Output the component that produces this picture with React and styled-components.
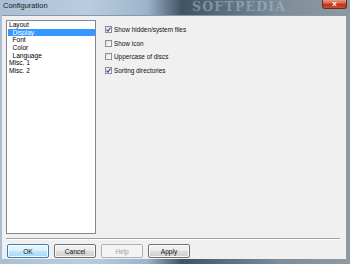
import React from "react";
import styled, { createGlobalStyle } from "styled-components";

const Global = createGlobalStyle`
  html, body { margin: 0; padding: 0; }
  body { width: 350px; height: 264px; overflow: hidden; font-family: "Liberation Sans", Arial, sans-serif; }
`;

const Frame = styled.div`
  width: 350px;
  height: 264px;
  display: flex;
  flex-direction: column;
  background: linear-gradient(90deg, #a9bfd3 0%, #b9cde0 25%, #9cb4ca 42%, #3f5362 52%, #55697a 62%, #7d8d99 80%, #8e9aa3 100%);
  box-sizing: border-box;
`;

const TitleBar = styled.div`
  position: relative;
  height: 15px;
  flex: none;
  display: flex;
  align-items: flex-start;
  justify-content: space-between;
  overflow: hidden;
`;

const Title = styled.span`
  font-family: "Liberation Sans", Arial, sans-serif;
  font-size: 7.5px;
  line-height: 12px;
  color: #1b1b1b;
  padding-left: 3px;
`;

const Watermark = styled.span`
  position: absolute;
  left: 192px;
  top: 0;
  font-family: "DejaVu Serif", serif;
  font-weight: bold;
  font-size: 12.5px;
  line-height: 13px;
  letter-spacing: 1.2px;
  color: rgba(170, 195, 215, 0.5);
  pointer-events: none;
`;

const Close = styled.div`
  width: 25px;
  height: 9px;
  margin-right: 3px;
  border: 1px solid #6b2a22;
  border-top: none;
  border-radius: 0 0 3px 3px;
  background: linear-gradient(180deg, #e79b88 0%, #d45a40 45%, #b7321c 55%, #c9522e 100%);
  display: flex;
  align-items: center;
  justify-content: center;
  color: #fff;
  font-size: 8px;
  font-weight: bold;
  line-height: 8px;
  box-sizing: border-box;
`;

const Client = styled.div`
  flex: 1;
  margin: 0 4px 5px 2px;
  background: #f0f0f0;
  border-top: 1px solid #8798a8;
  display: flex;
  flex-direction: column;
  overflow: hidden;
`;

const Body = styled.div`
  flex: 1;
  display: flex;
  padding: 4px 0 0 4px;
  gap: 9px;
`;

const Tree = styled.div`
  width: 90px;
  height: 214px;
  box-sizing: border-box;
  background: #fff;
  border: 1px solid #828790;
  padding: 0 0 0 1px;
  font-size: 6.6px;
  color: #000;
`;

const TreeItem = styled.div`
  height: 7.7px;
  line-height: 7.7px;
  padding-left: ${p => (p.$child ? 4.5 : 1)}px;
  background: ${p => (p.$selected ? "#3399ff" : "transparent")};
  color: ${p => (p.$selected ? "#fff" : "#000")};
  white-space: nowrap;
`;

const Options = styled.div`
  display: flex;
  flex-direction: column;
  gap: 6.7px;
  padding-top: 6px;
`;

const CheckRow = styled.label`
  display: flex;
  align-items: center;
  gap: 2px;
  font-size: 6.4px;
  line-height: 7px;
  color: #111;
  white-space: nowrap;
`;

const Box = styled.span`
  width: 7px;
  height: 7px;
  box-sizing: border-box;
  border: 1px solid #8e8f8f;
  background: linear-gradient(135deg, #dcdcdc 0%, #f4f4f4 60%, #fff 100%);
  display: flex;
  align-items: center;
  justify-content: center;
  flex: none;
`;

const Separator = styled.div`
  margin: 0 6px 0 4px;
  height: 1px;
  background: #a0a0a0;
  border-bottom: 1px solid #fff;
`;

const ButtonRow = styled.div`
  display: flex;
  gap: 5px;
  padding: 4px 0 0 5px;
  height: 19px;
  box-sizing: border-box;
`;

const Btn = styled.div`
  width: 42px;
  height: 14px;
  box-sizing: border-box;
  border: 1px solid ${p => (p.$default ? "#3c7fb1" : p.$disabled ? "#adb2b5" : "#707070")};
  border-radius: 2px;
  background: ${p =>
    p.$disabled
      ? "#f4f4f4"
      : p.$default
      ? "linear-gradient(180deg, #eaf6fd 0%, #d9f0fc 50%, #bee6fd 51%, #a7d9f5 100%)"
      : "linear-gradient(180deg, #f2f2f2 0%, #ebebeb 50%, #dddddd 51%, #cfcfcf 100%)"};
  box-shadow: inset 0 0 0 1px ${p => (p.$disabled ? "#f4f4f4" : "rgba(255,255,255,0.8)")};
  display: flex;
  align-items: center;
  justify-content: center;
  font-size: 6.6px;
  color: ${p => (p.$disabled ? "#a0a0a0" : "#111")};
`;

const Check = () => (
  <svg width="5" height="5" viewBox="0 0 5 5">
    <path d="M0.6 2.6 L2 4.2 L4.5 0.6" fill="none" stroke="#2a4c9a" strokeWidth="1.1" />
  </svg>
);

const tree = [
  { t: "Layout" },
  { t: "Display", child: true, selected: true },
  { t: "Font", child: true },
  { t: "Color", child: true },
  { t: "Language", child: true },
  { t: "Misc. 1" },
  { t: "Misc. 2" },
];

const options = [
  { t: "Show hidden/system files", on: true },
  { t: "Show icon", on: false },
  { t: "Uppercase of discs", on: false },
  { t: "Sorting directories", on: true },
];

export default function App() {
  return (
    <>
      <Global />
      <Frame>
        <TitleBar>
          <Title>Configuration</Title>
          <Watermark>SOFTPEDIA</Watermark>
          <Close>x</Close>
        </TitleBar>
        <Client>
          <Body>
            <Tree>
              {tree.map(i => (
                <TreeItem key={i.t} $child={i.child} $selected={i.selected}>
                  {i.t}
                </TreeItem>
              ))}
            </Tree>
            <Options>
              {options.map(o => (
                <CheckRow key={o.t}>
                  <Box>{o.on && <Check />}</Box>
                  {o.t}
                </CheckRow>
              ))}
            </Options>
          </Body>
          <Separator />
          <ButtonRow>
            <Btn $default>OK</Btn>
            <Btn>Cancel</Btn>
            <Btn $disabled>Help</Btn>
            <Btn>Apply</Btn>
          </ButtonRow>
        </Client>
      </Frame>
    </>
  );
}
